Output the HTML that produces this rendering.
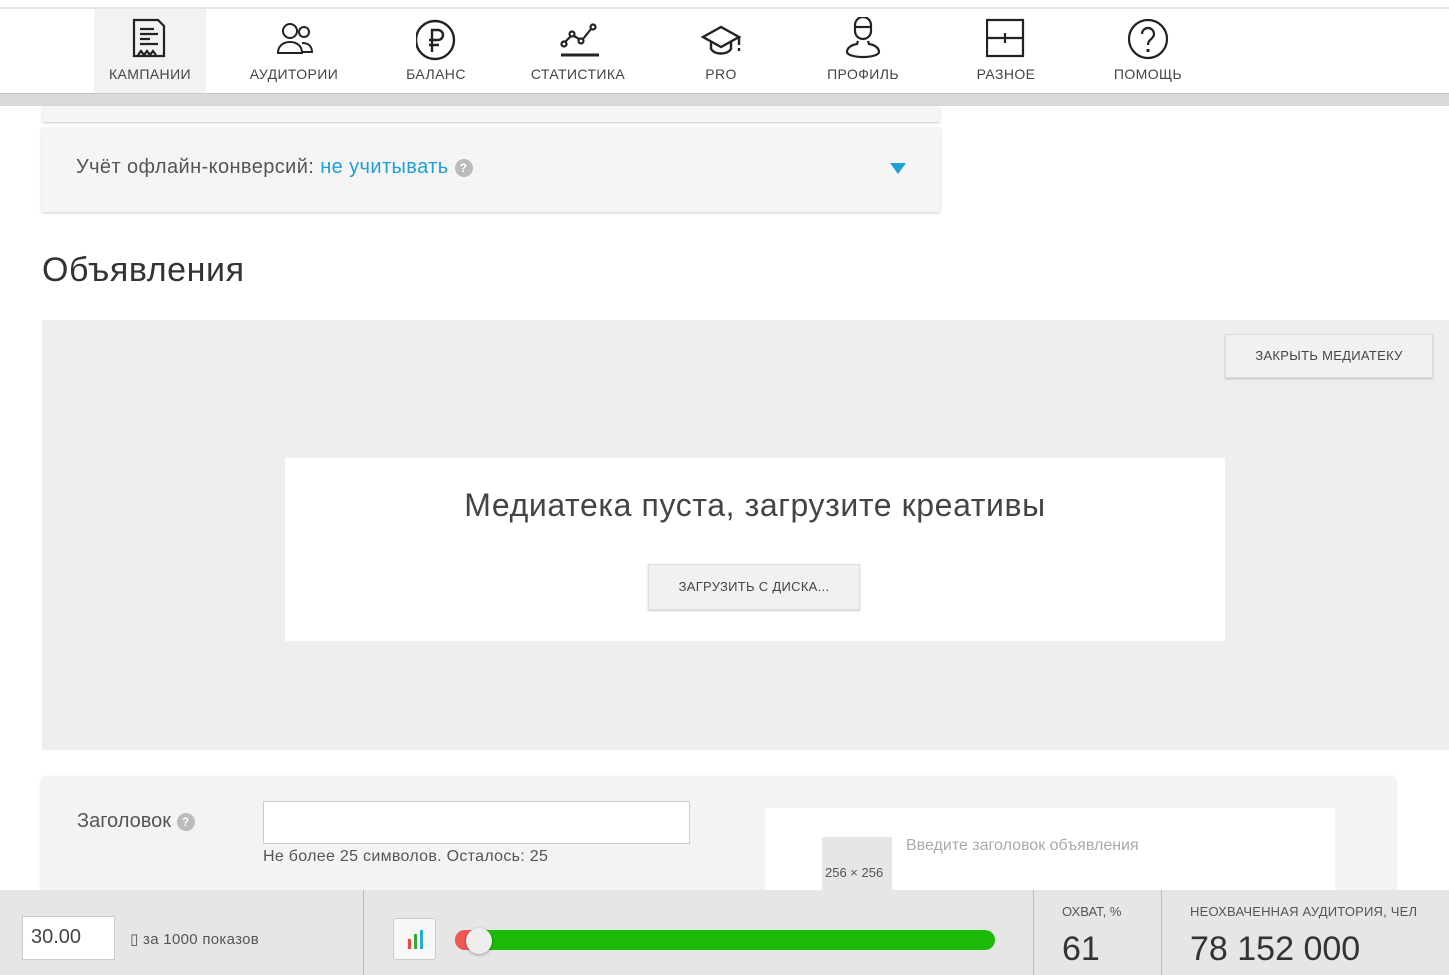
<!DOCTYPE html>
<html><head><meta charset="utf-8"><style>
*{margin:0;padding:0;box-sizing:border-box}
body{width:1449px;height:975px;overflow:hidden;background:#fff;font-family:"Liberation Sans","DejaVu Sans",sans-serif;color:#333;position:relative}
.a{position:absolute}
.nav{left:0;top:7px;width:1449px;height:86px;background:#fff;border-top:2px solid #e4e4e4}
.tab{position:absolute;top:0;width:112px;height:84px;text-align:center;font-size:14px;letter-spacing:.4px;color:#444}
.tab svg{position:absolute;left:36px;top:8px}
.tab span{position:absolute;left:-10px;right:-10px;top:57px}
.btn{background:#f1f1f1;border:1px solid #ddd;box-shadow:0 1px 2px rgba(0,0,0,.2);font-size:13px;color:#444;text-align:center;letter-spacing:.3px}
.q{display:inline-block;width:18px;height:18px;border-radius:50%;background:#bbb;color:#fff;font-size:12px;font-weight:bold;text-align:center;line-height:18px;vertical-align:middle}
</style></head><body>
<div class="a nav">
 <div class="tab" style="left:94px;background:#f2f2f2"><svg width="40" height="44" viewBox="0 0 40 44" fill="none" stroke="#222" stroke-width="2.2"><path d="M4 3h24l6 6v30H4z"/><path d="M10 12h14M10 17h18M10 22h10M10 27h18M8 38l3-4 3 4 3-4 3 4 3-4 3 4"/></svg><span>КАМПАНИИ</span></div>
 <div class="tab" style="left:238px"><svg width="44" height="44" viewBox="0 0 44 44" fill="none" stroke="#222" stroke-width="2"><circle cx="16" cy="14" r="7"/><path d="M4 36c0-7 5-11 12-11s12 4 12 11z"/><circle cx="30" cy="15" r="5"/><path d="M28 26c6 0 10 3 10 9h-10"/></svg><span>АУДИТОРИИ</span></div>
 <div class="tab" style="left:380px"><svg width="44" height="44" viewBox="0 0 44 44" fill="none" stroke="#222" stroke-width="2.4"><circle cx="19" cy="23" r="19"/><path d="M16 35V13h6a5 5 0 010 10h-9M13 28h10"/></svg><span>БАЛАНС</span></div>
 <div class="tab" style="left:522px"><svg width="44" height="44" viewBox="0 0 44 44" fill="none" stroke="#222" stroke-width="2.2"><path d="M3 38h38" stroke-width="3"/><circle cx="6" cy="27" r="2.5"/><circle cx="14" cy="17" r="2.5"/><circle cx="23" cy="24" r="2.5"/><circle cx="35" cy="10" r="2.5"/><path d="M7 25l6-6M16 19l5 3M25 22l8-10"/></svg><span>СТАТИСТИКА</span></div>
 <div class="tab" style="left:665px"><svg width="48" height="44" viewBox="0 0 48 44" fill="none" stroke="#222" stroke-width="2.4"><path d="M2 20l18-10 18 10-18 10z"/><path d="M10 24v8c4 6 16 6 20 0v-8"/><path d="M38 20v8M38 31v3"/></svg><span>PRO</span></div>
 <div class="tab" style="left:807px"><svg width="44" height="44" viewBox="0 0 44 44" fill="none" stroke="#222" stroke-width="2.2"><path d="M12 8a8 8 0 0116 0v6a8 8 0 01-16 0z"/><path d="M12 10h16"/><path d="M15 24l-1 3c-6 1-10 4-10 8 0 3 8 5 16 5s16-2 16-5c0-4-4-7-10-8l-1-3"/></svg><span>ПРОФИЛЬ</span></div>
 <div class="tab" style="left:950px"><svg width="44" height="44" viewBox="0 0 44 44" fill="none" stroke="#222" stroke-width="2.2"><path d="M1 3h36v36H1z"/><path d="M1 21h36M19 16v10"/></svg><span>РАЗНОЕ</span></div>
 <div class="tab" style="left:1092px"><svg width="44" height="44" viewBox="0 0 44 44" fill="none" stroke="#222" stroke-width="2.2"><circle cx="20" cy="22" r="19"/><path d="M14 17a6 6 0 1112 0c0 5-6 5-6 11"/><path d="M20 32v3" stroke-width="3"/></svg><span>ПОМОЩЬ</span></div>
</div>
<div class="a" style="left:0;top:93px;width:1449px;height:13px;background:#d9d9d9;border-top:1px solid #c8c8c8"></div>
<div class="a" style="left:42px;top:106px;width:898px;height:16px;background:#f5f5f5;box-shadow:0 1px 2px rgba(0,0,0,.2)"></div>
<div class="a" style="left:42px;top:128px;width:898px;height:84px;background:#f5f5f5;box-shadow:0 1px 3px rgba(0,0,0,.2)">
 <div class="a" style="left:34px;top:28px;font-size:20px;color:#555;letter-spacing:.4px">Учёт офлайн-конверсий: <span style="color:#1e9fd8">не учитывать</span> <span class="q">?</span></div>
 <div class="a" style="left:848px;top:35px;width:0;height:0;border-left:8px solid transparent;border-right:8px solid transparent;border-top:11px solid #1e9fd8"></div>
</div>
<div class="a" style="left:42px;top:251px;font-size:34px;color:#333;letter-spacing:.6px">Объявления</div>
<div class="a" style="left:42px;top:320px;width:1407px;height:430px;background:#eeeeee">
 <div class="a btn" style="left:1183px;top:14px;width:208px;height:44px;line-height:42px">ЗАКРЫТЬ МЕДИАТЕКУ</div>
 <div class="a" style="left:243px;top:138px;width:940px;height:183px;background:#fff;text-align:center">
  <div style="margin-top:29px;font-size:32px;color:#444;letter-spacing:.6px">Медиатека пуста, загрузите креативы</div>
  <div class="a btn" style="left:363px;top:106px;width:212px;height:46px;line-height:44px">ЗАГРУЗИТЬ С ДИСКА...</div>
 </div>
</div>
<div class="a" style="left:42px;top:778px;width:1353px;height:130px;background:#f3f3f3;box-shadow:0 0 4px rgba(0,0,0,.15)">
 <div class="a" style="left:35px;top:32px;font-size:20px;color:#555">Заголовок <span class="q">?</span></div>
 <div class="a" style="left:221px;top:23px;width:427px;height:43px;background:#fff;border:1px solid #ccc"></div>
 <div class="a" style="left:221px;top:70px;font-size:16px;color:#555;letter-spacing:.3px">Не более 25 символов. Осталось: 25</div>
 <div class="a" style="left:723px;top:30px;width:570px;height:100px;background:#fff">
  <div class="a" style="left:57px;top:29px;width:70px;height:70px;background:#e6e6e6;font-size:13px;color:#555;padding:28px 0 0 3px">256 × 256</div>
  <div class="a" style="left:141px;top:29px;font-size:16px;color:#aaa">Введите заголовок объявления</div>
 </div>
</div>
<div class="a" style="left:0;top:890px;width:1449px;height:85px;background:#e6e6e6">
 <div class="a" style="left:22px;top:26px;width:93px;height:44px;background:#fff;border:1px solid #ccc;font-size:20px;color:#444;padding:9px 0 0 8px">30.00</div>
 <div class="a" style="left:130px;top:40px;font-size:15px;color:#555;letter-spacing:.3px">▯ за 1000 показов</div>
 <div class="a" style="left:363px;top:0;width:1px;height:85px;background:#bbb"></div>
 <div class="a" style="left:393px;top:28px;width:43px;height:42px;background:#f7f7f7;border:1px solid #ccc;border-radius:3px">
  <div class="a" style="left:14px;top:20px;width:3px;height:10px;background:#e44"></div>
  <div class="a" style="left:20px;top:15px;width:3px;height:15px;background:#3a3"></div>
  <div class="a" style="left:26px;top:11px;width:3px;height:19px;background:#2aa8e0"></div>
 </div>
 <div class="a" style="left:455px;top:40px;width:540px;height:20px;background:#1cbb0a;border-radius:10px"></div>
 <div class="a" style="left:455px;top:40px;width:18px;height:20px;background:#f25555;border-radius:10px 0 0 10px"></div>
 <div class="a" style="left:466px;top:38px;width:26px;height:26px;background:#eee;border-radius:50%;box-shadow:0 1px 3px rgba(0,0,0,.35)"></div>
 <div class="a" style="left:1033px;top:0;width:1px;height:85px;background:#bbb"></div>
 <div class="a" style="left:1062px;top:14px;font-size:13px;color:#555">ОХВАТ, %</div>
 <div class="a" style="left:1062px;top:40px;font-size:34px;color:#333">61</div>
 <div class="a" style="left:1161px;top:0;width:1px;height:85px;background:#bbb"></div>
 <div class="a" style="left:1190px;top:14px;font-size:13px;color:#555;letter-spacing:.2px">НЕОХВАЧЕННАЯ АУДИТОРИЯ, ЧЕЛ</div>
 <div class="a" style="left:1190px;top:40px;font-size:34px;color:#333">78 152 000</div>
</div>
</body></html>
